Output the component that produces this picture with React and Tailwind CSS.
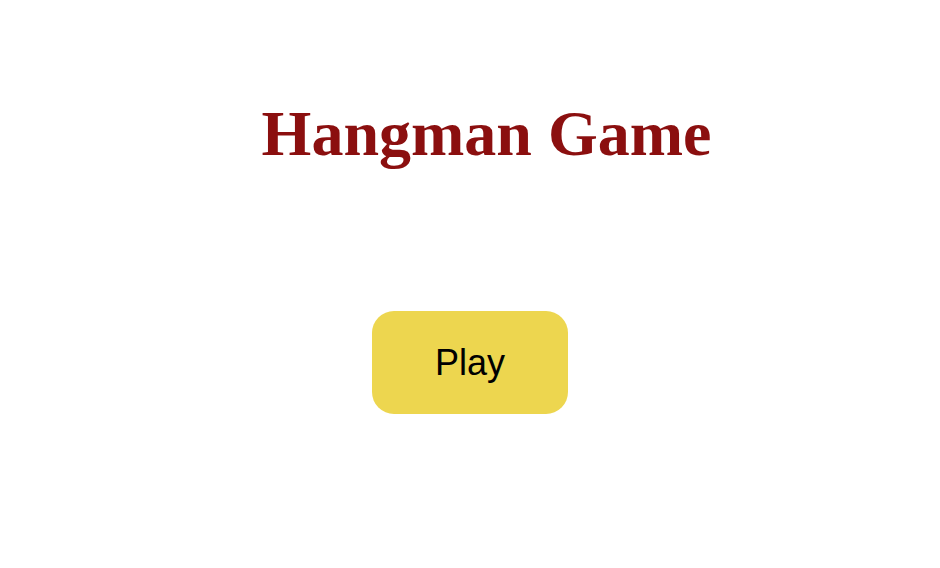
export default function App() {
  return (
    <div className="w-[940px] h-[568px] bg-white flex flex-col items-center">
      <h1 className="mt-[89px] pl-[33px] text-[64px] leading-[90px] font-bold text-[#8b0f0f] font-['Liberation_Serif','Times_New_Roman',serif]">
        Hangman Game
      </h1>
      <button className="mt-[132px] w-[196px] h-[103px] rounded-[22px] bg-[#edd64f] text-black text-[36px] font-['Liberation_Sans',Arial,sans-serif]">
        Play
      </button>
    </div>
  );
}
